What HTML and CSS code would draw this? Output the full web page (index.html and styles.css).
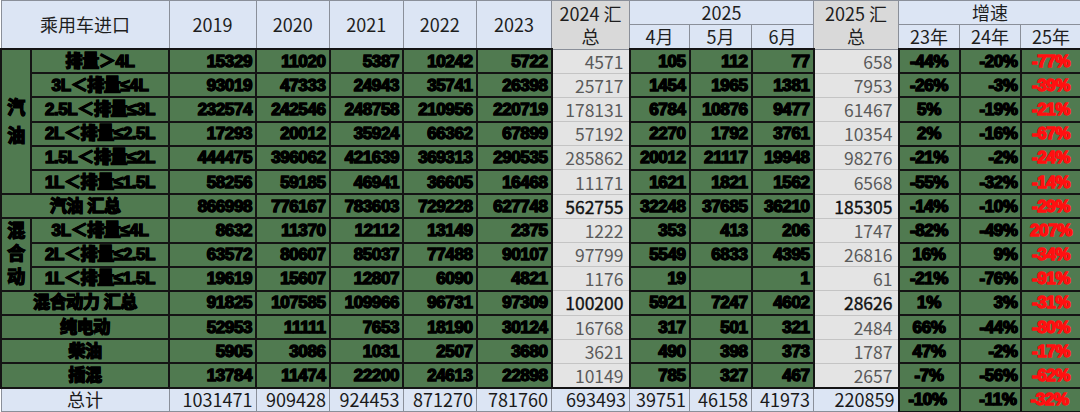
FILE: index.html
```html
<!DOCTYPE html>
<html lang="zh">
<head>
<meta charset="utf-8">
<title>乘用车进口</title>
<link rel="stylesheet" href="styles.css">
</head>
<body>
<table class="sheet">
  <colgroup>
    <col class="c-cat"><col class="c-label">
    <col class="c-2019"><col class="c-y"><col class="c-y"><col class="c-y"><col class="c-y2023">
    <col class="c-sum24"><col class="c-m4"><col class="c-m"><col class="c-m">
    <col class="c-sum25"><col class="c-g"><col class="c-g"><col class="c-g">
  </colgroup>
  <thead>
    <tr class="hrow">
      <th colspan="2" rowspan="2">乘用车进口</th>
      <th rowspan="2">2019</th>
      <th rowspan="2">2020</th>
      <th rowspan="2">2021</th>
      <th rowspan="2">2022</th>
      <th rowspan="2">2023</th>
      <th rowspan="2" class="hgrey">2024 汇<br>总</th>
      <th colspan="3">2025</th>
      <th rowspan="2" class="hgrey">2025 汇<br>总</th>
      <th colspan="3">增速</th>
    </tr>
    <tr class="hrow">
      <th>4月</th><th>5月</th><th>6月</th>
      <th>23年</th><th>24年</th><th>25年</th>
    </tr>
  </thead>
  <tbody>
    <tr>
      <td rowspan="6" class="cat">汽<br>油</td>
      <td class="lab">排量＞4L</td>
      <td>15329</td><td>11020</td><td>5387</td><td>10242</td><td>5722</td>
      <td class="grey">4571</td><td>105</td><td>112</td><td>77</td><td class="grey">658</td>
      <td class="p23">-44%</td><td class="p24">-20%</td><td class="p25">-77%</td>
    </tr>
    <tr>
      <td class="lab">3L＜排量≤4L</td>
      <td>93019</td><td>47333</td><td>24943</td><td>35741</td><td>26398</td>
      <td class="grey">25717</td><td>1454</td><td>1965</td><td>1381</td><td class="grey">7953</td>
      <td class="p23">-26%</td><td class="p24">-3%</td><td class="p25">-39%</td>
    </tr>
    <tr>
      <td class="lab">2.5L＜排量≤3L</td>
      <td>232574</td><td>242546</td><td>248758</td><td>210956</td><td>220719</td>
      <td class="grey">178131</td><td>6784</td><td>10876</td><td>9477</td><td class="grey">61467</td>
      <td class="p23">5%</td><td class="p24">-19%</td><td class="p25">-21%</td>
    </tr>
    <tr>
      <td class="lab">2L＜排量≤2.5L</td>
      <td>17293</td><td>20012</td><td>35924</td><td>66362</td><td>67899</td>
      <td class="grey">57192</td><td>2270</td><td>1792</td><td>3761</td><td class="grey">10354</td>
      <td class="p23">2%</td><td class="p24">-16%</td><td class="p25">-67%</td>
    </tr>
    <tr>
      <td class="lab">1.5L＜排量≤2L</td>
      <td>444475</td><td>396062</td><td>421639</td><td>369313</td><td>290535</td>
      <td class="grey">285862</td><td>20012</td><td>21117</td><td>19948</td><td class="grey">98276</td>
      <td class="p23">-21%</td><td class="p24">-2%</td><td class="p25">-24%</td>
    </tr>
    <tr>
      <td class="lab">1L＜排量≤1.5L</td>
      <td>58256</td><td>59185</td><td>46941</td><td>36605</td><td>16468</td>
      <td class="grey">11171</td><td>1621</td><td>1821</td><td>1562</td><td class="grey">6568</td>
      <td class="p23">-55%</td><td class="p24">-32%</td><td class="p25">-14%</td>
    </tr>
    <tr>
      <td colspan="2" class="lab">汽油 汇总</td>
      <td>866998</td><td>776167</td><td>783603</td><td>729228</td><td>627748</td>
      <td class="grey strong">562755</td><td>32248</td><td>37685</td><td>36210</td><td class="grey strong">185305</td>
      <td class="p23">-14%</td><td class="p24">-10%</td><td class="p25">-29%</td>
    </tr>
    <tr>
      <td rowspan="3" class="cat cat-hy">混<br>合<br>动</td>
      <td class="lab">3L＜排量≤4L</td>
      <td>8632</td><td>11370</td><td>12112</td><td>13149</td><td>2375</td>
      <td class="grey">1222</td><td>353</td><td>413</td><td>206</td><td class="grey">1747</td>
      <td class="p23">-82%</td><td class="p24">-49%</td><td class="p25">207%</td>
    </tr>
    <tr>
      <td class="lab">2L＜排量≤2.5L</td>
      <td>63572</td><td>80607</td><td>85037</td><td>77488</td><td>90107</td>
      <td class="grey">97799</td><td>5549</td><td>6833</td><td>4395</td><td class="grey">26816</td>
      <td class="p23">16%</td><td class="p24">9%</td><td class="p25">-34%</td>
    </tr>
    <tr>
      <td class="lab">1L＜排量≤1.5L</td>
      <td>19619</td><td>15607</td><td>12807</td><td>6090</td><td>4821</td>
      <td class="grey">1176</td><td>19</td><td></td><td>1</td><td class="grey">61</td>
      <td class="p23">-21%</td><td class="p24">-76%</td><td class="p25">-91%</td>
    </tr>
    <tr>
      <td colspan="2" class="lab">混合动力 汇总</td>
      <td>91825</td><td>107585</td><td>109966</td><td>96731</td><td>97309</td>
      <td class="grey strong">100200</td><td>5921</td><td>7247</td><td>4602</td><td class="grey strong">28626</td>
      <td class="p23">1%</td><td class="p24">3%</td><td class="p25">-31%</td>
    </tr>
    <tr>
      <td colspan="2" class="lab">纯电动</td>
      <td>52953</td><td>11111</td><td>7653</td><td>18190</td><td>30124</td>
      <td class="grey">16768</td><td>317</td><td>501</td><td>321</td><td class="grey">2484</td>
      <td class="p23">66%</td><td class="p24">-44%</td><td class="p25">-80%</td>
    </tr>
    <tr>
      <td colspan="2" class="lab">柴油</td>
      <td>5905</td><td>3086</td><td>1031</td><td>2507</td><td>3680</td>
      <td class="grey">3621</td><td>490</td><td>398</td><td>373</td><td class="grey">1787</td>
      <td class="p23">47%</td><td class="p24">-2%</td><td class="p25">-17%</td>
    </tr>
    <tr>
      <td colspan="2" class="lab">插混</td>
      <td>13784</td><td>11474</td><td>22200</td><td>24613</td><td>22898</td>
      <td class="grey">10149</td><td>785</td><td>327</td><td>467</td><td class="grey">2657</td>
      <td class="p23">-7%</td><td class="p24">-56%</td><td class="p25">-62%</td>
    </tr>
    <tr class="total">
      <td colspan="2" class="tlab">总计</td>
      <td>1031471</td><td>909428</td><td>924453</td><td>871270</td><td>781760</td>
      <td>693493</td><td>39751</td><td>46158</td><td>41973</td><td>220859</td>
      <td class="p23">-10%</td><td class="p24">-11%</td><td class="p25">-32%</td>
    </tr>
  </tbody>
</table>
</body>
</html>
```

FILE: styles.css
```css
html, body {
  margin: 0;
  padding: 0;
  background: #ffffff;
}

.sheet {
  border-collapse: collapse;
  table-layout: fixed;
  width: 1079px;
  font-family: "Liberation Sans", "Noto Sans CJK SC", sans-serif;
}

.c-cat { width: 30px; }
.c-label { width: 138px; }
.c-2019 { width: 87px; }
.c-y { width: 73.5px; }
.c-y2023 { width: 75px; }
.c-sum24 { width: 78px; }
.c-m4 { width: 60px; }
.c-m { width: 62px; }
.c-sum25 { width: 85px; }
.c-g { width: 61px; }

/* header */
.hrow th {
  height: 23px;
  padding: 0;
  background: #dce5f4;
  border: 1px solid #8a8f99;
  font-family: "Noto Sans CJK SC", sans-serif;
  font-weight: 400;
  font-size: 18px;
  line-height: 21px;
  color: #1e1e1e;
  text-align: center;
  vertical-align: middle;
  overflow: hidden;
  white-space: nowrap;
}

.hrow th.hgrey {
  background: #d9d9d9;
  line-height: 23px;
}

/* body */
tbody tr {
  height: 24.2px;
}

tbody td {
  padding: 0 3px 0 0;
  background: #507a50;
  border: 2px solid #141414;
  font-weight: 700;
  font-size: 17px;
  line-height: 19px;
  letter-spacing: -0.4px;
  color: #000000;
  -webkit-text-stroke: 1.3px #000000;
  text-shadow: 0.4px 0 0 #000000, -0.4px 0 0 #000000;
  text-align: right;
  vertical-align: middle;
  white-space: nowrap;
  overflow: hidden;
}

tbody td.lab {
  text-align: center;
  padding: 0;
}

tbody td.cat {
  text-align: center;
  padding: 0;
  font-size: 18px;
  line-height: 28px;
}

tbody td.cat-hy {
  line-height: 23px;
}

tbody td.grey {
  background: #e4e4e4;
  border-top: 1px solid #c4c4c4;
  border-bottom: 1px solid #c4c4c4;
  font-family: "Noto Sans CJK SC", sans-serif;
  font-weight: 400;
  font-size: 17.5px;
  letter-spacing: 0;
  color: #5a5a5a;
  -webkit-text-stroke: 0;
  text-shadow: none;
  padding-right: 5px;
}

tbody td.grey.strong {
  color: #111111;
  -webkit-text-stroke: 0.35px #111111;
}

tbody td.p23 {
  text-align: center;
  padding: 0;
}

tbody td.p24 {
  text-align: right;
  padding-right: 2px;
}

tbody td.p25 {
  text-align: center;
  padding: 0;
  color: #ff1010;
  -webkit-text-stroke: 1.3px #ff1010;
  text-shadow: 0.4px 0 0 #ff1010, -0.4px 0 0 #ff1010;
}

/* total row */
tr.total {
  height: 24px;
}

tr.total td {
  background: #dce5f4;
  border: 1px solid #8a8f99;
  border-top: 2px solid #141414;
  font-family: "Noto Sans CJK SC", sans-serif;
  font-weight: 400;
  font-size: 18px;
  line-height: 21px;
  letter-spacing: 0;
  color: #1a1a1a;
  -webkit-text-stroke: 0;
  text-shadow: none;
  padding-right: 3px;
}

tr.total td.tlab {
  text-align: center;
  padding: 0;
}

tr.total td.p23,
tr.total td.p24,
tr.total td.p25 {
  background: #507a50;
  border: 2px solid #141414;
  font-family: "Liberation Sans", "Noto Sans CJK SC", sans-serif;
  font-weight: 700;
  font-size: 17px;
  line-height: 19px;
  letter-spacing: -0.4px;
  color: #000000;
  -webkit-text-stroke: 1.3px #000000;
  text-shadow: 0.4px 0 0 #000000, -0.4px 0 0 #000000;
}

tr.total td.p25 {
  color: #ff1010;
  -webkit-text-stroke: 1.3px #ff1010;
  text-shadow: 0.4px 0 0 #ff1010, -0.4px 0 0 #ff1010;
}
```
